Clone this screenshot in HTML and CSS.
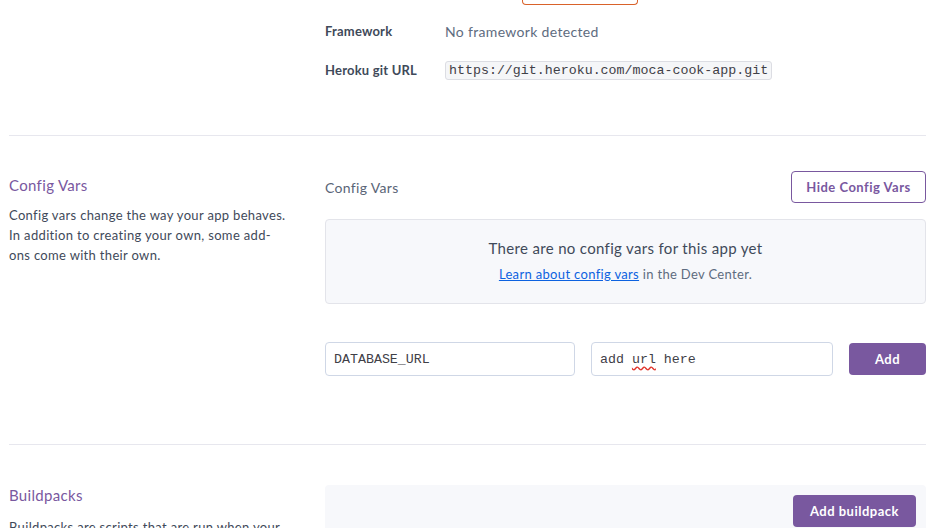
FILE: index.html
```html
<!DOCTYPE html>
<html>
<head>
<meta charset="utf-8">
<link rel="stylesheet" href="styles.css">
</head>
<body>
<div class="page">
  <section class="section info-section">
    <div class="side"></div>
    <div class="main">
      <div class="cut-button"></div>
      <dl class="info">
        <div class="info-row">
          <dt>Framework</dt>
          <dd class="muted">No framework detected</dd>
        </div>
        <div class="info-row">
          <dt>Heroku git URL</dt>
          <dd><code class="url">https://git.heroku.com/moca-cook-app.git</code></dd>
        </div>
      </dl>
    </div>
  </section>

  <section class="section config-section">
    <div class="side">
      <h2 class="side-title">Config Vars</h2>
      <p class="side-text">Config vars change the way your app behaves. In addition to creating your own, some add-ons come with their own.</p>
    </div>
    <div class="main">
      <div class="config-head">
        <span class="config-label">Config Vars</span>
        <button class="btn btn-outline">Hide Config Vars</button>
      </div>
      <div class="empty-box">
        <div class="empty-title">There are no config vars for this app yet</div>
        <div class="empty-sub"><a href="#" class="link">Learn about config vars</a> in the Dev Center.</div>
      </div>
      <div class="var-row">
        <input class="field field-key" type="text" value="DATABASE_URL">
        <div class="field field-val"><span>add </span><span class="spell">url</span><span> here</span></div>
        <button class="btn btn-solid btn-add">Add</button>
      </div>
    </div>
  </section>

  <section class="section build-section">
    <div class="side">
      <h2 class="side-title">Buildpacks</h2>
      <p class="side-text">Buildpacks are scripts that are run when your app is deployed.</p>
    </div>
    <div class="main">
      <div class="build-box">
        <button class="btn btn-solid btn-build">Add buildpack</button>
      </div>
    </div>
  </section>
</div>
</body>
</html>
```

FILE: styles.css
```css
* { box-sizing: border-box; }
html, body { margin: 0; padding: 0; background: #fff; overflow: hidden; }
body {
  font-family: "Lato", "Noto Sans", sans-serif;
  color: #3f4a5a;
  height: 528px;
  letter-spacing: 0.33px;
}
.page {
  padding: 0 7px 0 9px;
}
.section {
  display: grid;
  grid-template-columns: 316px 1fr;
  border-bottom: 1px solid #e7e7ee;
}
.info-section { height: 136px; }
.main { min-width: 0; }
.cut-button {
  width: 116px;
  height: 5px;
  margin-left: 197px;
  border: 1px solid #d9622a;
  border-top: none;
  border-radius: 0 0 4px 4px;
}
.info { margin: 16px 0 0; }
.info-row {
  display: grid;
  grid-template-columns: 120px 1fr;
  align-items: center;
  height: 20px;
  margin-bottom: 19px;
}
.info dt {
  font-size: 13px;
  font-weight: 700;
  color: #3f4a5a;
  letter-spacing: 0.2px;
}
.info dd { margin: 0; font-size: 14px; }
.muted { color: #5e6c80; }
.url {
  display: inline-block;
  font-family: "Liberation Mono", "DejaVu Sans Mono", monospace;
  font-size: 13.3px;
  line-height: 17px;
  letter-spacing: 0;
  padding: 0 3px;
  color: #3f4047;
  background: #f5f6f8;
  border: 1px solid #dcdde3;
  border-radius: 3px;
}

.config-section { padding: 35px 0 68px; }
.side-title {
  margin: 0;
  font-size: 15px;
  font-weight: 400;
  color: #79589f;
  line-height: 20px;
}
.config-section .side-title { margin-top: 4px; }
.side-text {
  margin: 10px 0 0;
  font-size: 13px;
  line-height: 20px;
  color: #3f4a5a;
  width: 279px;
}
.config-head {
  display: flex;
  justify-content: space-between;
  align-items: center;
}
.config-label { font-size: 14px; color: #5a6577; }
.btn {
  font-family: inherit;
  font-size: 13px;
  font-weight: 700;
  letter-spacing: 0.5px;
  border-radius: 4px;
  cursor: pointer;
}
.btn-outline {
  height: 32px;
  width: 135px;
  background: #fff;
  color: #79589f;
  border: 1px solid #79589f;
}
.empty-box {
  margin-top: 16px;
  height: 85px;
  background: #f7f8fb;
  border: 1px solid #e3e4ea;
  border-radius: 4px;
  text-align: center;
  padding-top: 18px;
}
.empty-title { font-size: 15px; color: #3f4a5a; line-height: 20px; }
.empty-sub { margin-top: 8px; font-size: 13px; color: #5e6c80; line-height: 16px; }
.link { color: #0d62e0; text-decoration: underline; }
.var-row {
  display: flex;
  align-items: center;
  margin-top: 38px;
  gap: 16px;
}
.field {
  height: 34px;
  border: 1px solid #cfd7e6;
  border-radius: 4px;
  background: #fff;
  font-family: "Liberation Mono", "DejaVu Sans Mono", monospace;
  font-size: 13.3px;
  letter-spacing: 0;
  color: #3f4047;
  padding: 0 8px;
  outline: none;
}
.field-key { width: 250px; }
.field-val {
  width: 242px;
  display: flex;
  align-items: center;
  white-space: pre;
}
.spell {
  text-decoration: underline wavy #e0332a;
  text-underline-offset: 3px;
}
.btn-solid {
  background: #79589f;
  color: #fff;
  border: none;
}
.btn-add { width: 77px; height: 32px; margin-left: auto; }

.build-section { border-bottom: none; padding-top: 40px; }
.build-section .side-text { margin-top: 12px; }
.build-box {
  height: 80px;
  background: #f7f8fb;
  border-radius: 4px;
  display: flex;
  justify-content: flex-end;
  align-items: flex-start;
  padding: 10px 10px 0 0;
}
.btn-build { width: 123px; height: 32px; }
```
